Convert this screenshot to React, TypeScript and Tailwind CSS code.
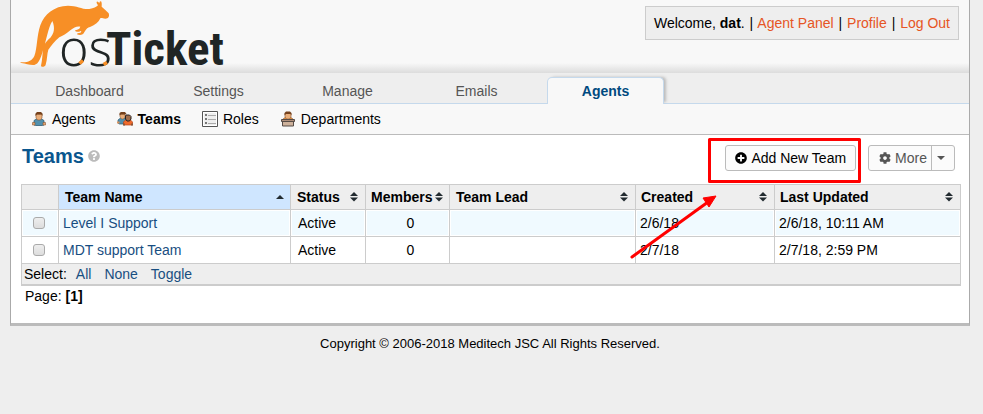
import type { ReactNode } from "react";
import { FaPlusCircle, FaCog, FaQuestionCircle } from "react-icons/fa";

const tabs = ["Dashboard", "Settings", "Manage", "Emails", "Agents"];

function Kangaroo() {
  return (
    <svg className="absolute left-0 top-0" width="96" height="72" viewBox="0 0 288 216" aria-hidden="true">
      <path
        fill="#f78f26"
        d="M6 186 C24 189 42 184 49 168 C58 146 56 108 67 76 C79 42 108 18 150 17 C178 17 194 29 214 27 C228 25 234 21 240 16 C234 9 235 4 239 5 C242 6 243 9 244 10 C244 4 248 2 250 5 C252 10 251 15 251 20 C260 27 264 32 272 40 C275 49 272 56 262 56 C254 55 250 53 247 55 C242 67 232 75 216 81 C202 84 202 96 194 103 C188 106 182 105 177 103 C176 99 181 99 187 98 C190 96 191 94 188 93 C181 97 174 96 171 92 C171 89 178 90 184 86 L187 80 C178 77 168 82 157 91 C146 100 134 108 124 112 C110 124 99 138 91 149 C87 160 88 178 83 194 C81 201 71 203 69 197 C73 180 73 164 75 151 C75 137 82 126 97 113 C108 101 112 84 103 63 C90 84 86 118 75 151 C68 176 62 192 49 195 C35 196 24 191 10 189 Z"
      />
    </svg>
  );
}

function Logo() {
  return (
    <a href="#" aria-label="osTicket" className="relative flex h-[72px] w-[200px] items-end pl-[41px] text-[#202525]">
      <Kangaroo />
      <span className="font-['Noto_Sans',sans-serif] text-[50px] font-light leading-[50px]">os</span>
      <span className="-ml-[6px] font-['Roboto_Condensed',Roboto,sans-serif] text-[47px] font-bold leading-[46px]">Ticket</span>
      <svg className="absolute left-0 top-0" width="96" height="72" viewBox="0 0 96 72" aria-hidden="true">
        <path d="M61.500 63.500l3.500-3M85.500 64.500l3.500-2" stroke="#f78f26" strokeWidth="3.500" />
      </svg>
    </a>
  );
}

function AgentIcon() {
  return (
    <svg width="16" height="16" viewBox="0 0 16 16" aria-hidden="true">
      <path d="M3 14V9.500L5.500 8h5L13 9.500V14l-1.500.500h-7z" fill="#5290ad" stroke="#315f77" strokeWidth=".8" />
      <path d="M1.500 11.500H4V14H1.500zM12 11.500h2.500V14H12z" fill="#e4a875" stroke="#8b5530" strokeWidth=".6" />
      <path d="M5 3h6v4L9.500 9h-3L5 7z" fill="#e9ae7a" stroke="#8b5530" strokeWidth=".6" />
      <path d="M4.500 5V2.500L6 1h4l1.500 1.500V5l-1-1.500H6z" fill="#74411c" />
    </svg>
  );
}

function TeamsIcon() {
  return (
    <svg width="16" height="16" viewBox="0 0 16 16" aria-hidden="true">
      <path d="M1 12V9l2.500-2H9v6H2z" fill="#5290ad" stroke="#315f77" strokeWidth=".7" />
      <path d="M0 10.500h2.500v2H0z" fill="#d9935e" />
      <path d="M3 3h5v3L6.500 8h-2L3 6z" fill="#e9ae7a" stroke="#8b5530" strokeWidth=".5" />
      <path d="M2.500 4.500V2L4 1h4l1.500 2L8 3.500H4z" fill="#74411c" />
      <path d="M6.500 14V11L9 8.500h4L15.500 11v3z" fill="#f06a2c" stroke="#b84316" strokeWidth=".7" />
      <path d="M6 12.500h2v2H6zM14 12.500h2v2h-2z" fill="#8a5639" />
      <path d="M9 4h3.500L14 5.500V8l-1.500 2H10L8.500 8V5z" fill="#a06d4a" stroke="#292321" />
    </svg>
  );
}

function RolesIcon() {
  return (
    <svg width="16" height="16" viewBox="0 0 16 16" aria-hidden="true">
      <path d="M.5.500h15v15H.5z" fill="#fff" stroke="#555" />
      <path d="M2 2h12v12H2z" fill="#eee" />
      <path d="M3 4h2M3 8h2M3 12h2" stroke="#777" strokeWidth="2" />
      <path d="M6 4.500h8M6 8.500h8M6 12.500h8" stroke="#aaa" />
    </svg>
  );
}

function DepartmentIcon() {
  return (
    <svg width="16" height="16" viewBox="0 0 16 16" aria-hidden="true">
      <path d="M3 9V8l2-1.500h6L13 8v1z" fill="#e9943c" stroke="#8b5530" strokeWidth=".6" />
      <path d="M5 2.500h6V6L9.500 8h-3L5 6z" fill="#e9ae7a" stroke="#8b5530" strokeWidth=".6" />
      <path d="M4.500 4.500V2L6 .500h4L11.500 2v2.500L10.500 3H6z" fill="#74411c" />
      <path d="M2.500 10.500h11v4.500h-11z" fill="#cdb19b" stroke="#554b45" />
      <path d="M1.500 8.500h13v2h-13z" fill="#ad8d79" stroke="#554b45" />
    </svg>
  );
}

function SortArrows({ asc = false }: { asc?: boolean }) {
  return (
    <svg width="8" height="10" viewBox="0 0 8 10" aria-hidden="true" className="shrink-0">
      <path d={asc ? "M0 7l4-4 4 4z" : "M0 4l4-4 4 4zM0 5.500h8l-4 4z"} fill="#222b30" />
    </svg>
  );
}

function Head({ children, className = "", asc = false }: { children: ReactNode; className?: string; asc?: boolean }) {
  return (
    <th scope="col" aria-sort={asc ? "ascending" : "none"} className={`h-6 p-0 text-left font-bold ${asc ? "bg-[#cfe6ff]" : "bg-[#eee]"} ${className}`}>
      <div className="flex items-center justify-between">
        {children}
        <SortArrows asc={asc} />
      </div>
    </th>
  );
}

const teams = [
  { name: "Level I Support", created: "2/6/18", updated: "2/6/18, 10:11 AM", cell: "bg-[#f0faff]" },
  { name: "MDT support Team", created: "2/7/18", updated: "2/7/18, 2:59 PM", cell: "bg-white" },
];

export default function App() {
  return (
    <div className="min-h-screen bg-[#eee] pb-4 pl-[10px] pr-[13px] font-['Liberation_Sans',Arial,sans-serif] text-[14px] leading-5 text-black">
      <div className="border-x border-b-[3px] border-x-[#aaa] border-b-[#bbb] bg-white">
        <header className="flex h-[73px] items-start justify-between bg-[#f8f8f8] bg-[linear-gradient(to_top,#dcdcdc,#f8f8f8_10px)] pl-[7px] pr-[10px]">
          <Logo />
          <p className="mt-[6px] border border-[#ccc] bg-[#eee] px-2 py-[6px]">
            Welcome, <strong>dat</strong>. <span className="mx-px">|</span>{" "}
            <a href="#" className="text-[#e65524]">Agent Panel</a> <span className="mx-px">|</span>{" "}
            <a href="#" className="text-[#e65524]">Profile</a> <span className="mx-px">|</span>{" "}
            <a href="#" className="text-[#e65524]">Log Out</a>
          </p>
        </header>

        <nav aria-label="Main" className="flex h-[31px] items-end gap-3 border-b border-[#c5d9ec] bg-[#eee] pl-5">
          {tabs.map((tab) => (
            <a
              key={tab}
              href="#"
              className={
                tab === "Agents"
                  ? "-mb-px h-[27px] w-[117px] rounded-t-[5px] border border-b-0 border-[#c5d9ec] bg-[#f8f8f8] pt-[3px] text-center font-bold text-[#004a80] shadow-[3px_-1px_3px_-1px_#bbb]"
                  : "h-[26px] w-[117px] pt-1 text-center text-[#555]"
              }
            >
              {tab}
            </a>
          ))}
        </nav>

        <nav aria-label="Agents" className="relative flex h-[31px] items-center gap-[21px] border-b border-[#bbb] bg-[#f8f8f8] pl-5">
          <a href="#" className="flex items-center gap-[5px]"><AgentIcon />Agents</a>
          <a href="#" className="flex items-center gap-[5px] font-bold"><TeamsIcon />Teams</a>
          <a href="#" className="flex items-center gap-[5px]"><RolesIcon />Roles</a>
          <a href="#" className="flex items-center gap-[5px]"><DepartmentIcon />Departments</a>
        </nav>

        <main className="px-[10px] pb-[17px]">
          <div className="flex h-[49px] items-start justify-between pr-1 pt-[10px]">
            <div className="flex items-center gap-1 pl-px pt-px">
              <h1 className="text-[20px] font-bold text-[#0a568e]">Teams</h1>
              <FaQuestionCircle className="size-3 text-[#bbb]" />
            </div>
            <div className="flex gap-3">
              <div className="relative">
                <button type="button" className="flex h-[26px] items-center gap-1 rounded-[3px] border border-[#bbb] bg-[#fbfbfb] px-[9px]">
                  <FaPlusCircle className="size-3" />
                  Add New Team
                </button>
                <svg className="pointer-events-none absolute -right-[5px] -top-[7px] z-10" width="231" height="124" viewBox="0 0 231 124" aria-hidden="true">
                  <path d="M79.500 1.500h150v42h-150z" fill="none" stroke="#f00" strokeWidth="3" strokeLinejoin="round" />
                  <path d="M2 119L78 64" stroke="#f00" strokeWidth="3" strokeLinecap="round" />
                  <path d="M86 58L79 69l-6-9z" fill="#f00" stroke="#f00" strokeLinejoin="round" />
                </svg>
              </div>
              <div className="flex h-[26px] rounded-[3px] border border-[#bbb] bg-[#fbfbfb] text-[#555]">
                <button type="button" className="flex items-center gap-1 pl-[10px] pr-1">
                  <FaCog className="size-3" />
                  More
                </button>
                <button type="button" aria-label="More actions" className="flex w-[23px] items-center justify-center border-l border-[#bbb] pr-1">
                  <svg width="8" height="4" viewBox="0 0 8 4" aria-hidden="true"><path d="M0 0h8L4 4z" fill="#555" /></svg>
                </button>
              </div>
            </div>
          </div>

          <table className="w-full table-fixed border-separate border-spacing-px border-b border-[#ccc] bg-[#ccc]">
            <thead>
              <tr>
                <th className="w-9 bg-[#eee] p-0" aria-label="Selected" />
                <Head asc className="w-[231px] pl-[6px] pr-[6px]">Team Name</Head>
                <Head className="w-[74px] pl-[6px] pr-[7px]">Status</Head>
                <Head className="w-[83px] pl-[5px] pr-[6px]">Members</Head>
                <Head className="w-[185px] pl-[6px] pr-[7px]">Team Lead</Head>
                <Head className="w-[138px] pl-[5px] pr-[7px]">Created</Head>
                <Head className="w-[185px] pl-[5px] pr-[7px]">Last Updated</Head>
              </tr>
            </thead>
            <tbody>
              {teams.map((t) => (
                <tr key={t.name} className="[&>td]:h-[26px] [&>td]:border [&>td]:border-white [&>td]:py-0">
                  <td className={`pl-0 pr-[2px] ${t.cell}`}>
                    <div className="flex justify-center">
                      <input type="checkbox" aria-label={t.name} className="size-3 appearance-none rounded-[3px] border border-[#aaa] bg-linear-to-b from-[#eee] to-[#ddd]" />
                    </div>
                  </td>
                  <td className={`px-[3px] ${t.cell}`}><a href="#" className="text-[#184e81]">{t.name}</a></td>
                  <td className={`px-[6px] ${t.cell}`}>Active</td>
                  <td className={`px-1 pl-[10px] text-center ${t.cell}`}>0</td>
                  <td className={`px-1 ${t.cell}`} />
                  <td className={`px-[3px] ${t.cell}`}>{t.created}</td>
                  <td className={`px-[3px] ${t.cell}`}>{t.updated}</td>
                </tr>
              ))}
            </tbody>
            <tfoot>
              <tr>
                <td colSpan={7} className="h-5 bg-[#eee] p-0 pl-[2px] leading-5">
                  <div className="flex gap-[13px]">
                    <span className="-mr-1">Select:</span>
                    <button type="button" className="text-[#184e81]">All</button>
                    <button type="button" className="text-[#184e81]">None</button>
                    <button type="button" className="text-[#184e81]">Toggle</button>
                  </div>
                </td>
              </tr>
            </tfoot>
          </table>
          <p className="pl-1">Page: <strong>[1]</strong></p>
        </main>
      </div>
      <footer className="pt-2 text-center text-[13px] leading-5">Copyright © 2006-2018 Meditech JSC All Rights Reserved.</footer>
    </div>
  );
}
